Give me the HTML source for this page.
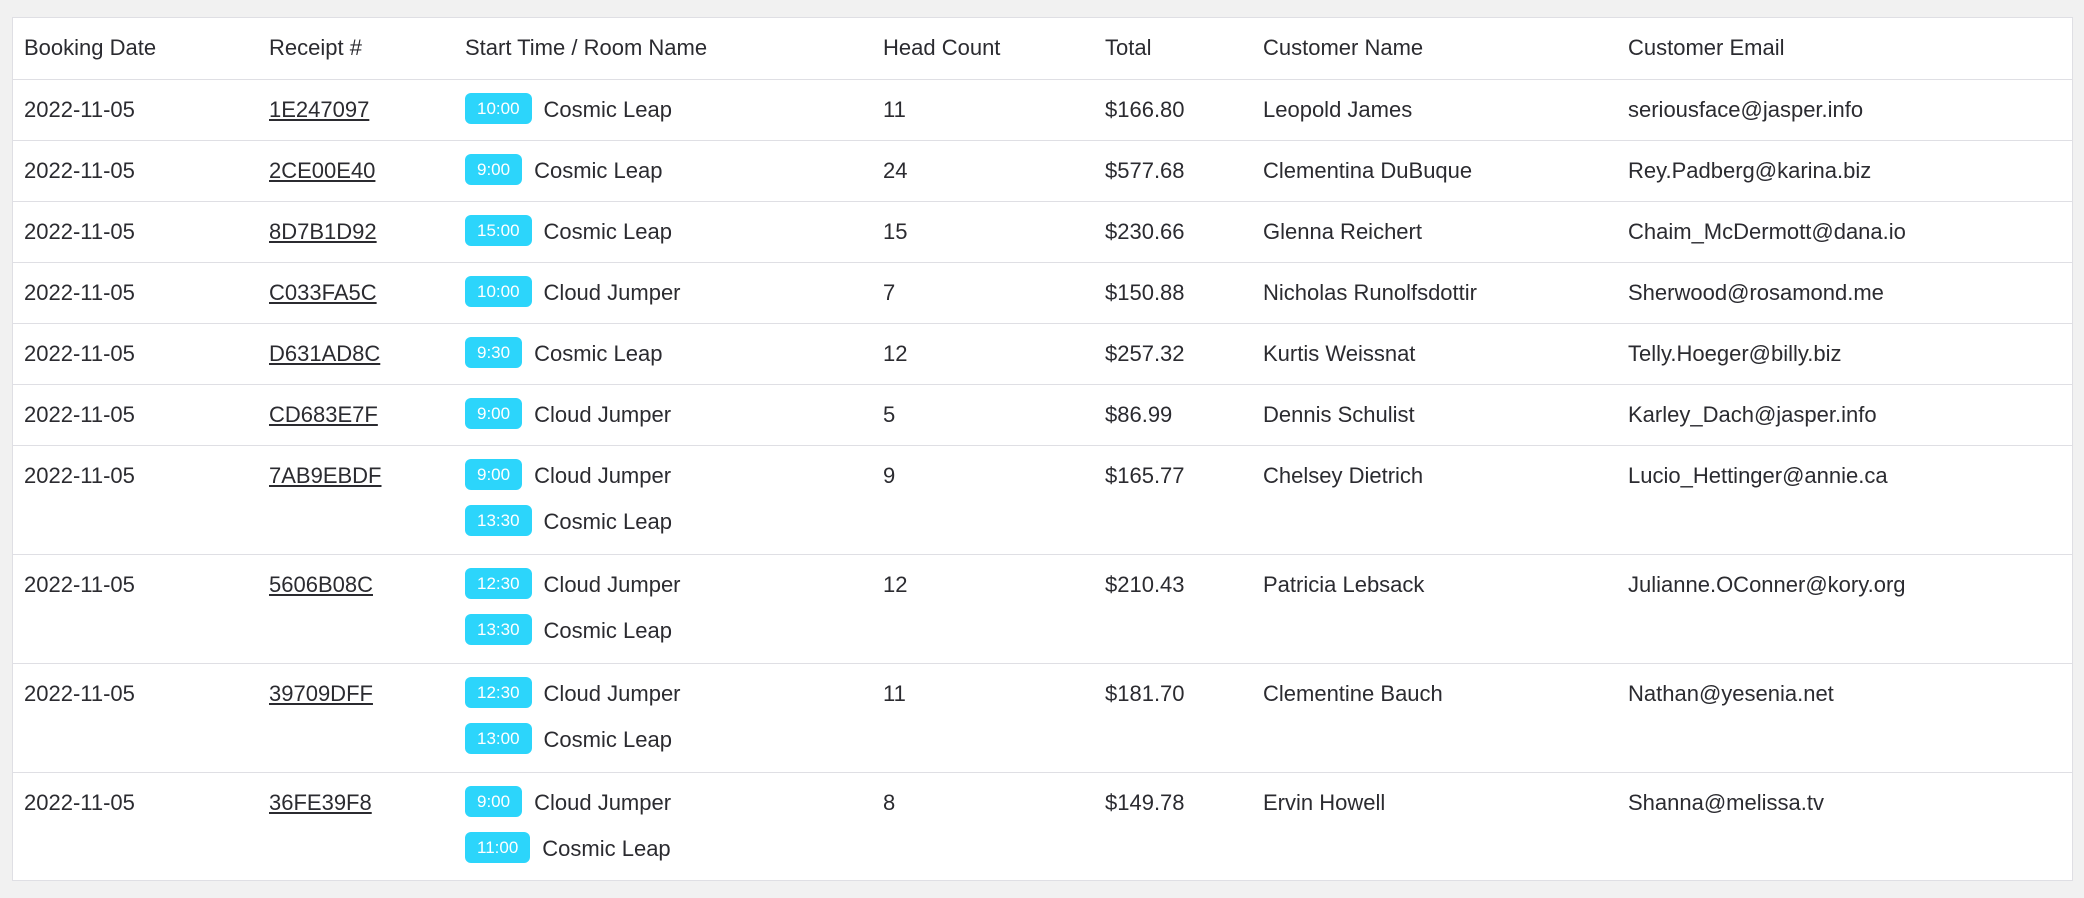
<!DOCTYPE html>
<html><head><style>
body{margin:0;background:#f1f1f1;width:2084px;height:898px;overflow:hidden;font-family:"Liberation Sans",sans-serif;color:#2b2b30;}
.wrap{position:absolute;left:12px;top:17px;width:2059px;height:862px;background:#fff;border:1px solid #dfdfe4;}
table{border-collapse:collapse;width:100%;table-layout:fixed;font-size:22px;}
td,th{text-align:left;font-weight:normal;vertical-align:top;padding:0;border-bottom:1px solid #dfdfe4;}
tr:last-child td{border-bottom:none;}
.l{height:46px;line-height:46px;white-space:nowrap;margin-top:7px;}
.l+.l{margin-top:0;}
tr{height:61px;}
tr.d{height:109px;}
td:first-child,th:first-child{padding-left:11px;}
a{color:#2b2b30;text-decoration:underline;}
.b{display:inline-block;background:#2cd5fb;color:#fff;font-size:17px;height:31px;line-height:31px;border-radius:6px;padding:0 12px;margin-right:12px;vertical-align:middle;position:relative;top:-2px;}
</style></head><body><div class="wrap"><table>
<colgroup><col style="width:256px"><col style="width:196px"><col style="width:418px"><col style="width:222px"><col style="width:158px"><col style="width:365px"><col></colgroup>
<tr><th><div class="l">Booking Date</div></th><th><div class="l">Receipt #</div></th><th><div class="l">Start Time / Room Name</div></th><th><div class="l">Head Count</div></th><th><div class="l">Total</div></th><th><div class="l">Customer Name</div></th><th><div class="l">Customer Email</div></th></tr>
<tr><td><div class="l">2022-11-05</div></td><td><div class="l"><a>1E247097</a></div></td><td><div class="l"><span class="b">10:00</span>Cosmic Leap</div></td><td><div class="l">11</div></td><td><div class="l">$166.80</div></td><td><div class="l">Leopold James</div></td><td><div class="l">seriousface@jasper.info</div></td></tr>
<tr><td><div class="l">2022-11-05</div></td><td><div class="l"><a>2CE00E40</a></div></td><td><div class="l"><span class="b">9:00</span>Cosmic Leap</div></td><td><div class="l">24</div></td><td><div class="l">$577.68</div></td><td><div class="l">Clementina DuBuque</div></td><td><div class="l">Rey.Padberg@karina.biz</div></td></tr>
<tr><td><div class="l">2022-11-05</div></td><td><div class="l"><a>8D7B1D92</a></div></td><td><div class="l"><span class="b">15:00</span>Cosmic Leap</div></td><td><div class="l">15</div></td><td><div class="l">$230.66</div></td><td><div class="l">Glenna Reichert</div></td><td><div class="l">Chaim_McDermott@dana.io</div></td></tr>
<tr><td><div class="l">2022-11-05</div></td><td><div class="l"><a>C033FA5C</a></div></td><td><div class="l"><span class="b">10:00</span>Cloud Jumper</div></td><td><div class="l">7</div></td><td><div class="l">$150.88</div></td><td><div class="l">Nicholas Runolfsdottir</div></td><td><div class="l">Sherwood@rosamond.me</div></td></tr>
<tr><td><div class="l">2022-11-05</div></td><td><div class="l"><a>D631AD8C</a></div></td><td><div class="l"><span class="b">9:30</span>Cosmic Leap</div></td><td><div class="l">12</div></td><td><div class="l">$257.32</div></td><td><div class="l">Kurtis Weissnat</div></td><td><div class="l">Telly.Hoeger@billy.biz</div></td></tr>
<tr><td><div class="l">2022-11-05</div></td><td><div class="l"><a>CD683E7F</a></div></td><td><div class="l"><span class="b">9:00</span>Cloud Jumper</div></td><td><div class="l">5</div></td><td><div class="l">$86.99</div></td><td><div class="l">Dennis Schulist</div></td><td><div class="l">Karley_Dach@jasper.info</div></td></tr>
<tr class="d"><td><div class="l">2022-11-05</div></td><td><div class="l"><a>7AB9EBDF</a></div></td><td><div class="l"><span class="b">9:00</span>Cloud Jumper</div><div class="l"><span class="b">13:30</span>Cosmic Leap</div></td><td><div class="l">9</div></td><td><div class="l">$165.77</div></td><td><div class="l">Chelsey Dietrich</div></td><td><div class="l">Lucio_Hettinger@annie.ca</div></td></tr>
<tr class="d"><td><div class="l">2022-11-05</div></td><td><div class="l"><a>5606B08C</a></div></td><td><div class="l"><span class="b">12:30</span>Cloud Jumper</div><div class="l"><span class="b">13:30</span>Cosmic Leap</div></td><td><div class="l">12</div></td><td><div class="l">$210.43</div></td><td><div class="l">Patricia Lebsack</div></td><td><div class="l">Julianne.OConner@kory.org</div></td></tr>
<tr class="d"><td><div class="l">2022-11-05</div></td><td><div class="l"><a>39709DFF</a></div></td><td><div class="l"><span class="b">12:30</span>Cloud Jumper</div><div class="l"><span class="b">13:00</span>Cosmic Leap</div></td><td><div class="l">11</div></td><td><div class="l">$181.70</div></td><td><div class="l">Clementine Bauch</div></td><td><div class="l">Nathan@yesenia.net</div></td></tr>
<tr class="d"><td><div class="l">2022-11-05</div></td><td><div class="l"><a>36FE39F8</a></div></td><td><div class="l"><span class="b">9:00</span>Cloud Jumper</div><div class="l"><span class="b">11:00</span>Cosmic Leap</div></td><td><div class="l">8</div></td><td><div class="l">$149.78</div></td><td><div class="l">Ervin Howell</div></td><td><div class="l">Shanna@melissa.tv</div></td></tr>
</table></div></body></html>
